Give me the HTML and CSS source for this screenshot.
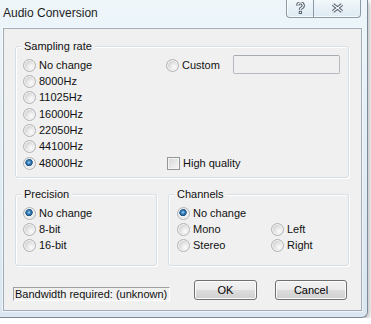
FILE: index.html
```html
<!doctype html>
<html lang="en">
<head>
	<meta charset="UTF-8">
	<title>Audio Conversion</title>
	<link rel="stylesheet" href="styles.css">
</head>
<body>
<div class="window">
	<!--标题栏-->
	<div class="titlebar">
		<span class="title">Audio Conversion</span>
		<div class="caps">
			<span class="cap cap_help">
				<svg width="9" height="12" viewBox="0 0 9 12">
					<path d="M1.8 3.6 A2.7 2.6 0 1 1 5.6 5.9 Q4.4 6.5 4.4 7.8" fill="none" stroke="#4d5966" stroke-width="3.2"/>
					<path d="M1.8 3.6 A2.7 2.6 0 1 1 5.6 5.9 Q4.4 6.5 4.4 7.8" fill="none" stroke="#fbfcfd" stroke-width="1.2"/>
					<rect x="3.2" y="9.3" width="2.4" height="2.2" fill="#fbfcfd" stroke="#4d5966" stroke-width="0.9"/>
				</svg>
			</span>
			<span class="cap cap_close">
				<svg width="13" height="10" viewBox="0 0 13 10">
					<path d="M2 1.5 L11 8.5 M11 1.5 L2 8.5" stroke="#4d5966" stroke-width="3.4"/>
					<path d="M2 1.5 L11 8.5 M11 1.5 L2 8.5" stroke="#fbfcfd" stroke-width="1.3"/>
				</svg>
			</span>
		</div>
	</div>
	<!--内容-->
	<div class="client">
		<div class="group sampling">
			<span class="legend">Sampling rate</span>
			<div class="sampling_grid">
				<div class="custom">
					<label class="opt custom_opt"><span class="radio"></span>Custom</label>
					<span class="textbox"></span>
				</div>
				<label class="opt hq"><span class="check"></span>High quality</label>
				<label class="opt left"><span class="radio"></span>No change</label>
				<label class="opt left"><span class="radio"></span>8000Hz</label>
				<label class="opt left"><span class="radio"></span>11025Hz</label>
				<label class="opt left"><span class="radio"></span>16000Hz</label>
				<label class="opt left"><span class="radio"></span>22050Hz</label>
				<label class="opt left"><span class="radio"></span>44100Hz</label>
				<label class="opt left"><span class="radio on"></span>48000Hz</label>
			</div>
		</div>
		<div class="lower">
			<div class="group precision">
				<span class="legend">Precision</span>
				<div class="small_grid">
					<label class="opt"><span class="radio on"></span>No change</label>
					<label class="opt"><span class="radio"></span>8-bit</label>
					<label class="opt"><span class="radio"></span>16-bit</label>
				</div>
			</div>
			<div class="group channels">
				<span class="legend">Channels</span>
				<div class="small_grid channels_grid">
					<label class="opt"><span class="radio on"></span>No change</label>
					<span></span>
					<label class="opt"><span class="radio"></span>Mono</label>
					<label class="opt"><span class="radio"></span>Left</label>
					<label class="opt"><span class="radio"></span>Stereo</label>
					<label class="opt"><span class="radio"></span>Right</label>
				</div>
			</div>
		</div>
		<div class="bottom">
			<div class="bandwidth">Bandwidth required: (unknown)</div>
			<button class="btn btn_ok">OK</button>
			<button class="btn btn_cancel">Cancel</button>
		</div>
	</div>
</div>
</body>
</html>
```

FILE: styles.css
```css
*{margin:0;padding:0;box-sizing:border-box}
body{
	background:#fff;
	font-family:"Liberation Sans",Arial,sans-serif;
	font-size:11px;
	color:#111;
}
.window{
	width:368px;
	height:318px;
	background:linear-gradient(to bottom,#eef6fa 0%,#e3eef5 40%,#dae6f0 100%);
	border-right:1px solid #7d8b98;
	border-bottom:1px solid #7d8b98;
	border-bottom-right-radius:6px;
	box-shadow:2px 2px 5px rgba(0,0,0,0.25);
}
/*标题栏*/
.titlebar{
	height:28px;
	display:flex;
	align-items:flex-start;
	padding-left:3px;
}
.title{
	font-size:12px;
	line-height:15px;
	padding-top:6px;
	color:#1e1e1e;
}
.caps{
	margin-left:auto;
	margin-right:6px;
	width:75px;
	height:18px;
	display:flex;
	border:1px solid #8c99a7;
	border-top:0;
	border-radius:0 0 4px 4px;
	background:linear-gradient(to bottom,#f3f8fb,#dde9f2);
	box-shadow:inset 0 -1px 0 rgba(255,255,255,0.8),inset 1px 0 0 rgba(255,255,255,0.8);
}
.cap{
	display:flex;
	align-items:center;
	justify-content:center;
	padding-bottom:1px;
}
.cap_help{width:27px;border-right:1px solid #8c99a7}
.cap_close{flex:1}
/*内容*/
.client{
	margin-left:3px;
	width:359px;
	height:283px;
	background:#f0f0f0;
	border:1px solid #a3adb7;
	box-shadow:0 0 0 1px rgba(255,255,255,0.5);
}
.group{
	position:relative;
	border:1px solid #d5dfe5;
	border-radius:3px;
	box-shadow:inset 1px 1px 0 #fff,1px 1px 0 #fff;
}
.legend{
	position:absolute;
	top:-7px;
	left:5px;
	padding:0 3px;
	line-height:13px;
	background:#f0f0f0;
}
.sampling{
	margin:17px 0 0 11px;
	width:334px;
	height:132px;
	padding:10px 0 0 7px;
}
.sampling_grid{
	display:grid;
	grid-template-columns:143px 1fr;
	grid-template-rows:repeat(7,16.33px);
	align-items:center;
}
.left{grid-column:1}
.custom{
	grid-column:2;
	grid-row:1;
	display:flex;
	align-items:center;
}
.custom_opt{width:67px}
.hq{grid-column:2;grid-row:7;padding-left:1px}
.textbox{
	display:block;
	width:107px;
	height:19px;
	border:1px solid #b5bbc1;
	border-top-color:#a5abb1;
	border-radius:2px;
	background:#f0f0f0;
	margin-top:-1px;
}
.opt{
	display:flex;
	align-items:center;
	gap:3px;
	line-height:13px;
	white-space:nowrap;
}
.radio{
	flex:none;
	width:13px;
	height:13px;
	border-radius:50%;
	border:1px solid #b1b3b5;
	background:radial-gradient(circle at 65% 65%,#fbfbfb 0,#ececec 3px,#d6d6d6 6px);
	box-shadow:inset 0 0 0 1px #f4f4f4;
}
.radio.on{
	background:radial-gradient(circle at 45% 40%,#a9d5f5 0,#3d86c1 1.6px,#1a4f7f 3.4px,#f2f2f2 4.1px,#e3e3e3 6px);
}
.check{
	flex:none;
	width:13px;
	height:13px;
	border:1px solid #959696;
	background:linear-gradient(135deg,#d6d6d6,#f7f7f7);
	box-shadow:inset 0 0 0 1px #f4f4f4;
}
/*下部分组*/
.lower{
	display:flex;
	gap:11px;
	margin:16px 0 0 11px;
}
.precision{width:142px;height:72px;padding:11px 0 0 7px}
.channels{width:181px;height:72px;padding:11px 0 0 8px}
.small_grid{
	display:grid;
	grid-template-rows:repeat(3,15.8px);
	align-items:center;
}
.channels_grid{grid-template-columns:94px 1fr}
/*底部*/
.bottom{
	display:flex;
	align-items:flex-start;
	margin-top:14px;
	padding-left:9px;
}
.bandwidth{
	margin-top:7px;
	width:157px;
	height:14px;
	line-height:12px;
	padding-left:1px;
	border:1px solid #fff;
	border-top-color:#a0a0a0;
	border-left-color:#a0a0a0;
}
.btn{
	height:20px;
	border:1px solid #707070;
	border-radius:3px;
	background:linear-gradient(to bottom,#f2f2f2 0%,#ebebeb 50%,#dddddd 50%,#cfcfcf 100%);
	box-shadow:inset 0 0 0 1px #fcfcfc;
	font-family:inherit;
	font-size:11px;
	color:#000;
	outline:0;
}
.btn_ok{width:63px;margin-left:24px}
.btn_cancel{width:72px;margin-left:18px}
```
